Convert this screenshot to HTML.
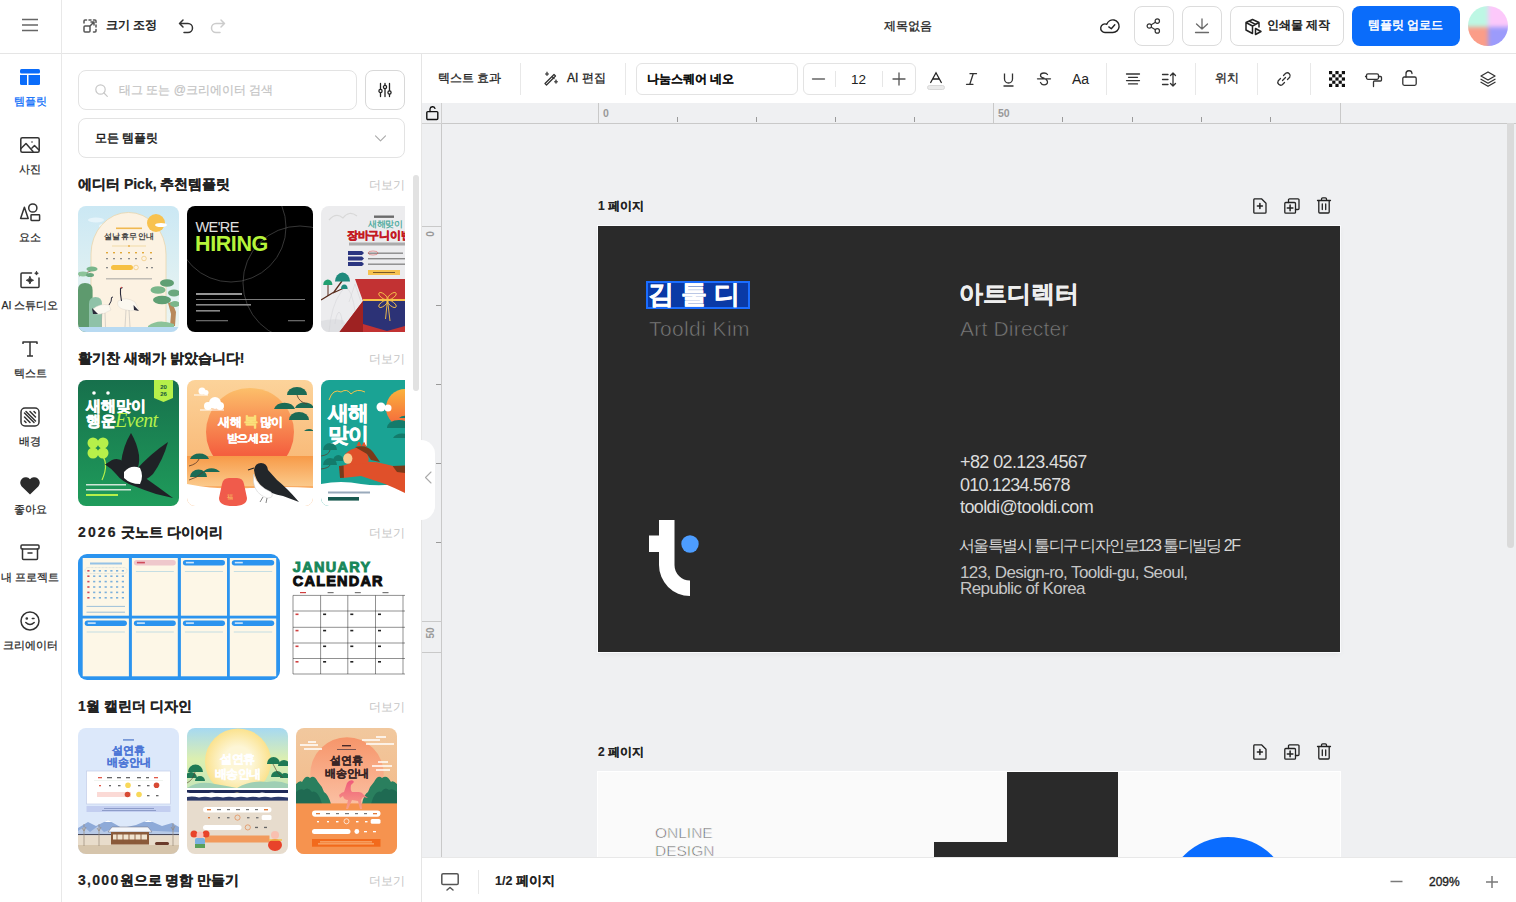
<!DOCTYPE html>
<html><head><meta charset="utf-8">
<style>
*{box-sizing:border-box;margin:0;padding:0}
html,body{width:1516px;height:902px;overflow:hidden;background:#fff;font-family:"Liberation Sans",sans-serif;color:#222}
.a{position:absolute}
.t{position:absolute;white-space:nowrap;line-height:1}
svg{display:block;position:absolute;overflow:visible}
.ic{fill:none;stroke:#2b2b2b;stroke-width:1.5;stroke-linecap:round;stroke-linejoin:round}
.rl{font-size:10.5px;color:#2a2a2a;text-align:center;width:60px;left:0;-webkit-text-stroke:0.25px currentColor}
.m{-webkit-text-stroke:0.3px currentColor}
.hd{font-size:14px;font-weight:bold;color:#222;left:78px;-webkit-text-stroke:0.2px currentColor}
.b{-webkit-text-stroke:0.12px currentColor}
.more{font-size:12px;color:#c4c4c4;left:369px}
.th{position:absolute;border-radius:8px;overflow:hidden}
.vd{position:absolute;width:1px;top:63px;height:32px;background:#e8e8e8}
.tk{position:absolute;background:#9a9a9a}
</style></head><body>
<!-- ===== canvas background ===== -->
<div class="a" style="left:421px;top:103px;width:1095px;height:754px;background:#eff0f2"></div>

<!-- ===== borders ===== -->
<div class="a" style="left:0;top:53px;width:1516px;height:1px;background:#e5e5e5"></div>
<div class="a" style="left:61px;top:0;width:1px;height:902px;background:#e8e8e8"></div>
<div class="a" style="left:421px;top:54px;width:1px;height:848px;background:#e5e5e5"></div>

<!-- ===== top bar ===== -->
<svg style="left:21px;top:17px" width="18" height="16"><path d="M1 2.5H17M1 8H17M1 13.5H17" stroke="#666" stroke-width="1.5"/></svg>
<!-- resize icon -->
<svg style="left:83px;top:19px" width="14" height="14" class="ic" style="stroke:#444"><path d="M1 4V2A1 1 0 0 1 2 1H3.5M6 1H8M10.5 1H12A1 1 0 0 1 13 2V3.5M13 6V8M13 10.5V12A1 1 0 0 1 12 13H10.5" stroke="#555"/><rect x="1" y="7" width="6" height="6" rx="1" stroke="#555"/><path d="M7 7L11 3M8 3H11V6" stroke="#555"/></svg>
<div class="t" style="left:106px;top:19px;font-size:12px;color:#1a1a1a;-webkit-text-stroke:0.5px #1a1a1a">크기 조정</div>
<!-- undo/redo -->
<svg style="left:178px;top:18px" width="16" height="16" class="ic"><path d="M5 2L1.5 5.5L5 9M1.5 5.5H10A4.5 4.5 0 0 1 10 14.5H6" stroke="#333"/></svg>
<svg style="left:210px;top:18px" width="16" height="16" class="ic"><path d="M11 2L14.5 5.5L11 9M14.5 5.5H6A4.5 4.5 0 0 0 6 14.5H10" stroke="#ccc"/></svg>

<div class="t m" style="left:884px;top:20px;font-size:12px;color:#222">제목없음</div>

<!-- cloud check -->
<svg style="left:1100px;top:18px" width="20" height="16" class="ic"><path d="M5.3 14.5A4.3 4.3 0 1 1 6.8 6.3A6.3 6.3 0 1 1 12.8 14.5Z" stroke="#222" stroke-width="1.4"/><path d="M8.8 8.9L11.3 10.7L14.8 6.8" stroke="#222" stroke-width="1.4"/></svg>
<!-- share btn -->
<div class="a" style="left:1134px;top:6px;width:40px;height:40px;border:1px solid #dcdcdc;border-radius:8px"></div>
<svg style="left:1145px;top:17px" width="18" height="18" class="ic"><circle cx="12.3" cy="4.1" r="2.2" stroke="#333" stroke-width="1.2"/><circle cx="4.3" cy="9" r="2.2" stroke="#333" stroke-width="1.2"/><circle cx="12.3" cy="13.9" r="2.2" stroke="#333" stroke-width="1.2"/><path d="M6.3 7.8L10.4 5.3M6.3 10.2L10.4 12.7" stroke="#333" stroke-width="1.2"/></svg>
<!-- download btn -->
<div class="a" style="left:1182px;top:6px;width:40px;height:40px;border:1px solid #dcdcdc;border-radius:8px"></div>
<svg style="left:1193px;top:17px" width="18" height="18" class="ic"><path d="M9 2V12M3.5 7L9 12L14.5 7M2.5 15.5H15.5" stroke="#6a6a6a" stroke-width="1.3"/></svg>
<!-- print btn -->
<div class="a" style="left:1230px;top:6px;width:114px;height:40px;border:1px solid #dcdcdc;border-radius:8px"></div>
<svg style="left:1244px;top:18px" width="18" height="18" class="ic"><path d="M8.5 1.5L15 4.5V9M8.5 1.5L2 4.5V12L8.5 15.5M2 4.5L8.5 8L15 4.5M8.5 8V15.5M5 3L11.5 6.3" stroke="#222"/><path d="M11.5 10.5L17 13.5L11.5 16.5Z" stroke="#222"/></svg>
<div class="t" style="left:1267px;top:19px;font-size:12px;color:#1a1a1a;-webkit-text-stroke:0.5px #1a1a1a">인쇄물 제작</div>
<!-- upload btn -->
<div class="a" style="left:1352px;top:6px;width:108px;height:40px;border-radius:8px;background:#0a6cfa"></div>
<div class="t" style="left:1368px;top:19px;font-size:12px;color:#fff;-webkit-text-stroke:0.5px #fff">템플릿 업로드</div>
<div class="a" style="left:1468px;top:6px;width:40px;height:40px;border-radius:50%;overflow:hidden"><div class="a" style="left:-6px;top:-6px;width:52px;height:52px;filter:blur(2.2px)"><div class="a" style="left:0;top:0;width:26px;height:27px;background:#bdf7e4"></div><div class="a" style="left:26px;top:0;width:26px;height:27px;background:#fcc8fa"></div><div class="a" style="left:0;top:27px;width:26px;height:25px;background:#fb9d88"></div><div class="a" style="left:26px;top:27px;width:26px;height:25px;background:#9c9bfb"></div></div></div>

<!-- ===== left rail ===== -->
<svg style="left:20px;top:69px" width="20" height="16"><rect x="0" y="0" width="20" height="4.5" rx="1.5" fill="#0a6cfa"/><path d="M0 6H7V16H1.5A1.5 1.5 0 0 1 0 14.5Z" fill="#0a6cfa"/><path d="M8.5 6H20V14.5A1.5 1.5 0 0 1 18.5 16H8.5Z" fill="#0a6cfa"/></svg>
<div class="t rl" style="top:96px;color:#0a6cfa">템플릿</div>
<svg style="left:20px;top:137px" width="20" height="16" class="ic"><rect x="0.8" y="0.8" width="18.4" height="14.4" rx="1.5" stroke="#333"/><path d="M1 11.5L6 6.5L13 14.5M12 11L14.5 8.5L19 13" stroke="#333"/><circle cx="12" cy="5" r="0.8" fill="#333" stroke="none"/></svg>
<div class="t rl" style="top:164px">사진</div>
<svg style="left:20px;top:203px" width="20" height="18" class="ic"><path d="M4.4 4.3L0.6 15.4H8.2Z" stroke="#333"/><circle cx="12.8" cy="5" r="4.1" stroke="#333"/><rect x="11" y="11.8" width="8.6" height="5.6" rx="0.6" stroke="#333"/></svg>
<div class="t rl" style="top:232px">요소</div>
<svg style="left:20px;top:271px" width="20" height="18" class="ic"><path d="M11.5 2H2A1 1 0 0 0 1 3V15.5A1 1 0 0 0 2 16.5H18A1 1 0 0 0 19 15.5V7" stroke="#333"/><path d="M9.9 5.7Q10.3 8.9 13.5 9.3Q10.3 9.7 9.9 12.9Q9.5 9.7 6.3 9.3Q9.5 8.9 9.9 5.7Z" fill="#333" stroke="#333" stroke-width="1"/><path d="M16.5 0.5Q16.7 2.1 18.3 2.3Q16.7 2.5 16.5 4.1Q16.3 2.5 14.7 2.3Q16.3 2.1 16.5 0.5Z" fill="#333" stroke="#333" stroke-width="0.8"/></svg>
<div class="t rl" style="top:300px">AI 스튜디오</div>
<svg style="left:22px;top:341px" width="16" height="16" class="ic"><path d="M1 3V1H15V3M8 1V15M5 15H11" stroke="#333" stroke-linecap="butt"/></svg>
<div class="t rl" style="top:368px">텍스트</div>
<svg style="left:20px;top:407px" width="20" height="20" class="ic"><rect x="1" y="1" width="18" height="18" rx="4" stroke="#333"/><path d="M14 4.5L15.5 6M10 4.5L15.5 10M6 4.5L15.5 14M4.5 6L14 15.5M4.5 10L10 15.5M4.5 14L6 15.5" stroke="#333"/></svg>
<div class="t rl" style="top:436px">배경</div>
<svg style="left:19px;top:476px" width="22" height="19"><path d="M11 18.5L2.5 10.3A5.2 5.2 0 0 1 11 3.2A5.2 5.2 0 0 1 19.5 10.3Z" fill="#2b2b2b"/></svg>
<div class="t rl" style="top:504px">좋아요</div>
<svg style="left:20px;top:544px" width="20" height="16" class="ic"><rect x="1" y="1" width="18" height="4" rx="1" stroke="#333"/><path d="M2.5 5V14.5A1 1 0 0 0 3.5 15.5H16.5A1 1 0 0 0 17.5 14.5V5M8 9H12" stroke="#333"/></svg>
<div class="t rl" style="top:572px">내 프로젝트</div>
<svg style="left:20px;top:611px" width="20" height="20" class="ic"><circle cx="10" cy="10" r="9" stroke="#333"/><circle cx="6.8" cy="7.5" r="0.6" fill="#333" stroke="#333"/><path d="M12.3 7.5H14M5.8 11.5Q10 15.5 14.2 11.5" stroke="#333"/></svg>
<div class="t rl" style="top:640px">크리에이터</div>

<!-- ===== panel controls ===== -->
<div class="a" style="left:78px;top:70px;width:279px;height:40px;border:1px solid #e3e3e3;border-radius:8px"></div>
<svg style="left:95px;top:84px" width="13" height="13" class="ic"><circle cx="5.5" cy="5.5" r="4.7" stroke="#c8c8c8" stroke-width="1.2"/><path d="M9 9L12.3 12.3" stroke="#c8c8c8" stroke-width="1.2"/></svg>
<div class="t" style="left:119px;top:84px;font-size:12px;color:#c4c4c4;-webkit-text-stroke:0.2px #c4c4c4">태그 또는 @크리에이터 검색</div>
<div class="a" style="left:365px;top:70px;width:40px;height:40px;border:1px solid #d8d8d8;border-radius:8px"></div>
<svg style="left:378px;top:83px" width="14" height="14" class="ic"><path d="M2.5 0.5V13.5M7 0.5V13.5M11.5 0.5V13.5" stroke="#222" stroke-width="1.3"/><circle cx="2.5" cy="8" r="1.6" fill="#fff" stroke="#222" stroke-width="1.3"/><circle cx="7" cy="4" r="1.6" fill="#fff" stroke="#222" stroke-width="1.3"/><circle cx="11.5" cy="9.5" r="1.6" fill="#fff" stroke="#222" stroke-width="1.3"/></svg>
<div class="a" style="left:78px;top:118px;width:327px;height:40px;border:1px solid #e3e3e3;border-radius:8px"></div>
<div class="t" style="left:95px;top:132px;font-size:12px;color:#1a1a1a;-webkit-text-stroke:0.45px #1a1a1a">모든 템플릿</div>
<svg style="left:375px;top:135px" width="11" height="7" class="ic"><path d="M0.5 0.8L5.5 5.8L10.5 0.8" stroke="#aaa" stroke-width="1.1"/></svg>

<!-- section headers -->
<div class="t hd" style="top:177px">에디터 Pick, 추천템플릿</div><div class="t more" style="top:179px">더보기</div>
<div class="t hd" style="top:351px">활기찬 새해가 밝았습니다!</div><div class="t more" style="top:353px">더보기</div>
<div class="t hd" style="top:525px"><span style="letter-spacing:2.1px">2026</span> 굿노트 다이어리</div><div class="t more" style="top:527px">더보기</div>
<div class="t hd" style="top:699px">1월 캘린더 디자인</div><div class="t more" style="top:701px">더보기</div>
<div class="t hd" style="top:873px"><span style="letter-spacing:1.3px">3,000</span>원으로 명함 만들기</div><div class="t more" style="top:875px">더보기</div>

<!-- ===== thumbnails row 1 ===== -->
<div class="th" style="left:78px;top:206px;width:101px;height:126px">
<svg width="101" height="126" style="position:static">
<defs><linearGradient id="r1a" x1="0" y1="0" x2="0" y2="1"><stop offset="0" stop-color="#cbe8f4"/><stop offset="1" stop-color="#eef6f1"/></linearGradient></defs>
<rect width="101" height="126" fill="url(#r1a)"/>
<ellipse cx="18" cy="14" rx="8" ry="2.5" fill="#e6f4fa"/><ellipse cx="30" cy="20" rx="9" ry="3" fill="#eef8fb"/>
<path d="M13 126V48A37 41 0 0 1 88 48V126Z" fill="#fcf2e2" stroke="#e9d6ad" stroke-width="0.8"/>
<circle cx="78" cy="17" r="9" fill="#f8c24f"/><ellipse cx="83" cy="19" rx="6" ry="2" fill="#fff"/>
<rect x="38" y="21.5" width="26" height="1.6" fill="#f0b850"/>
<text x="51" y="33" font-size="7.5" text-anchor="middle" fill="#3d3d3d" font-weight="bold" letter-spacing="-0.3">설날 휴무 안내</text>
<path d="M34 40H68" stroke="#eac981" stroke-width="0.6"/><circle cx="51" cy="40" r="1" fill="#eab050"/>
<g fill="#e2a93a"><rect x="28" y="46" width="2" height="1.4"/><rect x="35" y="46" width="2" height="1.4"/><rect x="42" y="46" width="2" height="1.4"/><rect x="50" y="46" width="2" height="1.4"/><rect x="57" y="46" width="2" height="1.4"/><rect x="64" y="46" width="2" height="1.4"/><rect x="72" y="46" width="2" height="1.4"/></g>
<g fill="#8a8a8a"><rect x="28" y="52" width="2" height="1.3"/><rect x="35" y="52" width="2" height="1.3"/><rect x="42" y="52" width="2" height="1.3"/><rect x="50" y="52" width="2" height="1.3"/><rect x="57" y="52" width="2" height="1.3"/><rect x="72" y="52" width="2" height="1.3"/><rect x="28" y="61" width="2" height="1.3"/><rect x="68" y="61" width="2" height="1.3"/><rect x="73" y="61" width="2" height="1.3"/></g>
<circle cx="66" cy="52.5" r="2.3" fill="none" stroke="#e8b44a" stroke-width="0.5"/><circle cx="58" cy="61.5" r="2.3" fill="none" stroke="#e8b44a" stroke-width="0.5"/>
<rect x="33" y="59" width="22" height="5" rx="2.5" fill="#f6c043"/>
<rect x="28" y="72" width="46" height="1.5" fill="#9a9a9a" opacity="0.6"/>
<path d="M0 126V84Q0 77 7 77Q14.6 77 14.6 84V126Z" fill="#5e9a6e"/><path d="M11 126V98Q11 91 17.5 91Q24 91 24 98V126Z" fill="#8fc2a8"/>
<path d="M1 70L17 63" stroke="#8a6a4a" stroke-width="0.9"/><ellipse cx="14" cy="63" rx="5.5" ry="2.6" fill="#79b68a"/><ellipse cx="5" cy="68" rx="5" ry="2.4" fill="#8cc39a"/><ellipse cx="12" cy="69" rx="4" ry="2" fill="#6aa87e"/>
<path d="M90 97L93 108L92 120L97 120L98 106L94 96Z" fill="#b8895a"/>
<ellipse cx="89" cy="77" rx="7" ry="3.8" fill="#5f9f73"/><ellipse cx="80" cy="84" rx="7.5" ry="3.8" fill="#7ab68a"/><ellipse cx="96" cy="87" rx="6" ry="3.4" fill="#6aa87e"/><ellipse cx="84" cy="94" rx="9" ry="4.2" fill="#5f9f73"/><ellipse cx="97" cy="98" rx="5" ry="3" fill="#7ab68a"/>
<path d="M70 120Q80 112 96 118V122H70Z" fill="#8cc39a"/>
<path d="M40 95Q48 90 57 96L61 104Q52 106 44 103Q38 100 40 95Z" fill="#fbf8f0" stroke="#d8d2c4" stroke-width="0.4"/>
<path d="M55.5 99L61 105L56 104Z" fill="#2b2b3b"/>
<path d="M43.5 95Q42 88 42.5 82.5L44.5 81.5" stroke="#2b2b3b" stroke-width="1.1" fill="none"/><circle cx="43.3" cy="81.5" r="0.8" fill="#d84a4a"/>
<path d="M48 104L47 121M51 104L52 121" stroke="#aaa" stroke-width="0.45"/>
<path d="M15 103Q22 97 31 99L33 104Q26 109 18 108Z" fill="#fbf8f0" stroke="#d8d2c4" stroke-width="0.4"/>
<path d="M14 102L20 108L15 108Z" fill="#2b2b3b"/>
<path d="M31 99Q34 95 33.5 91.5L35 91" stroke="#2b2b3b" stroke-width="1" fill="none"/>
<path d="M24 107L23 121M27 107L27.5 121" stroke="#aaa" stroke-width="0.45"/>
<rect x="0" y="121" width="101" height="5" fill="#b8daf2"/>
</svg></div>

<div class="th" style="left:187px;top:206px;width:126px;height:126px;background:#000">
<svg width="126" height="126" style="position:static">
<circle cx="44" cy="21" r="55" fill="none" stroke="#5a5a5a" stroke-width="0.6"/>
<circle cx="113" cy="77" r="57" fill="none" stroke="#5a5a5a" stroke-width="0.6"/>
<text x="8.5" y="25.5" font-size="14.5" fill="#e0e0e0" letter-spacing="-0.6" style="font-weight:normal">WE'RE</text>
<text x="8" y="45" font-size="21.5" font-weight="bold" fill="#b6f43a" letter-spacing="-0.4">HIRING</text>
<rect x="9" y="87" width="46" height="2" fill="#bbb" opacity="0.8"/>
<path d="M9 93.5H118" stroke="#9a9a9a" stroke-width="0.8"/>
<rect x="9" y="98" width="55" height="1.6" fill="#888"/><rect x="9" y="104" width="24" height="1.6" fill="#888"/>
<rect x="9" y="114" width="32" height="1.3" fill="#666"/><rect x="101" y="114" width="17" height="1.3" fill="#666"/>
</svg></div>

<div class="th" style="left:321px;top:206px;width:84px;height:126px;border-radius:8px 0 0 8px;background:#ececee">
<svg width="84" height="126" style="position:static">
<path d="M8 14Q15 6 22 12Q28 4 36 10" stroke="#d8d8d8" stroke-width="1.2" fill="none"/>
<rect x="53" y="9.5" width="20" height="2.4" fill="#555" opacity="0.85"/>
<text x="47" y="20.8" font-size="8.5" fill="#3aa596" stroke="#3aa596" stroke-width="0.2" letter-spacing="-0.4">새해맞이</text>
<text x="26" y="32.6" font-size="11" font-weight="bold" fill="#c41a24" stroke="#c41a24" stroke-width="0.6" letter-spacing="-0.3">장바구니이벤트</text>
<rect x="28" y="36.5" width="56" height="3" fill="#777" opacity="0.55"/>
<g fill="#2b3580"><path d="M27 45H41L43 47L41 49H27Z"/><path d="M27 50.5H41L43 52.5L41 54.5H27Z"/><path d="M27 56H41L43 58L41 60H27Z"/></g>
<g fill="#8a8a8a"><rect x="47" y="46.5" width="35" height="1.4"/><rect x="47" y="52" width="37" height="1.4"/><rect x="47" y="57.5" width="37" height="1.4"/></g>
<ellipse cx="52" cy="47" rx="5" ry="2" fill="none" stroke="#d84848" stroke-width="0.5"/>
<rect x="47" y="64" width="32" height="5" fill="#f6c350"/><rect x="52" y="66" width="22" height="1" fill="#7a5a2a"/>
<path d="M0 126V115Q10 112 22 114L30 126Z" fill="#dfe0e3"/>
<path d="M8 126Q10 100 20 86Q26 78 30 88Q36 104 34 126M14 118Q15 108 18 106Q21 108 21 118M28 96L34 78L40 96" fill="none" stroke="#d2d3d6" stroke-width="0.5"/>
<path d="M34 73H84V126H18.5L42 95Z" fill="#c23233"/>
<path d="M18.5 126L42 95V126H33Z" fill="#9e2222"/>
<path d="M42 95H84V120L66 125L42 118Z" fill="#2c3276"/>
<rect x="42" y="93" width="42" height="2" fill="#f7c24a"/>
<g fill="none" stroke="#f7c24a" stroke-width="0.9"><ellipse cx="62" cy="90" rx="5" ry="2.2" transform="rotate(35 62 90)"/><ellipse cx="71" cy="90" rx="5" ry="2.2" transform="rotate(-35 71 90)"/><ellipse cx="62" cy="98" rx="5" ry="2.2" transform="rotate(-35 62 98)"/><ellipse cx="71" cy="98" rx="5" ry="2.2" transform="rotate(35 71 98)"/><path d="M66.5 94L64.5 113M66.5 94L69 115"/></g>
<path d="M0 94L13 86L21 75M12 87L23 82" stroke="#5b2e1e" stroke-width="1.3" fill="none"/>
<path d="M7 79L7 90" stroke="#5b2e1e" stroke-width="1"/>
<path d="M14 75.5A7.5 9 0 0 1 29 75.5Z" fill="#1f8a7c"/><path d="M2.2 79A4.6 5.5 0 0 1 11.4 79Z" fill="#22a070"/><path d="M20 83A3.3 4.5 0 0 1 26.6 83Z" fill="#1f8a7c"/>
</svg></div>
<!-- ===== thumbnails row 2 ===== -->
<div class="th" style="left:78px;top:380px;width:101px;height:126px">
<svg width="101" height="126" style="position:static">
<defs><linearGradient id="r2a" x1="0" y1="0" x2="0" y2="1"><stop offset="0" stop-color="#17704c"/><stop offset="1" stop-color="#1f9c5b"/></linearGradient></defs>
<rect width="101" height="126" fill="url(#r2a)"/>
<path d="M76 0H95V18L85.5 22L76 18Z" fill="#b6f04a"/>
<text x="85.5" y="9" font-size="6" font-weight="bold" fill="#14573a" text-anchor="middle">20</text><text x="85.5" y="16" font-size="6" font-weight="bold" fill="#14573a" text-anchor="middle">26</text>
<circle cx="16" cy="13" r="1.8" fill="#fff"/><circle cx="30" cy="13" r="1.8" fill="#fff"/>
<text x="8" y="30.5" font-size="14.5" font-weight="bold" fill="#fff" stroke="#fff" stroke-width="0.7" letter-spacing="0">새해맞이</text>
<text x="8" y="46" font-size="14.5" font-weight="bold" fill="#fff" stroke="#fff" stroke-width="0.7" letter-spacing="0">행운</text>
<text x="37" y="46.5" font-size="20" font-style="italic" fill="#b6f04a" font-family="Liberation Serif" letter-spacing="-0.6">Event</text>
<g fill="#b6f04a"><circle cx="15" cy="63" r="5.5"/><circle cx="25" cy="63" r="5.5"/><circle cx="15" cy="73" r="5.5"/><circle cx="25" cy="73" r="5.5"/></g>
<path d="M22 73Q32 82 24 100" stroke="#b6f04a" stroke-width="1.2" fill="none"/>
<path d="M27 84.5L34 80Q40 77 46 82L58 91Q70 100 80 107L95 118L78 114Q66 110 56 106Q44 102 38 94Q33 88 27 84.5Z" fill="#1f2226"/>
<path d="M43 83Q45 66 53 53Q59 63 61 75Q62 85 58 92Z" fill="#1f2226"/>
<path d="M57 91Q72 74 90 62Q85 80 75 94Q68 101 61 101Z" fill="#1f2226"/>
<path d="M46 92Q53 84 62 88Q66 96 62 104Q52 104 46 98Z" fill="#fff"/>
<rect x="8" y="104" width="40" height="1.5" fill="#cfe6d8"/><rect x="8" y="109" width="45" height="1.5" fill="#cfe6d8"/>
<rect x="8" y="114" width="32" height="2" fill="#b6f04a"/>
</svg></div>

<div class="th" style="left:187px;top:380px;width:126px;height:126px">
<svg width="126" height="126" style="position:static">
<defs><linearGradient id="r2b" x1="0" y1="0" x2="0" y2="1"><stop offset="0" stop-color="#fcd39a"/><stop offset="0.6" stop-color="#f9bb7a"/><stop offset="1" stop-color="#f9a458"/></linearGradient>
<linearGradient id="r2c" x1="0" y1="0" x2="0" y2="1"><stop offset="0" stop-color="#fcbf6a"/><stop offset="0.75" stop-color="#f4603f"/></linearGradient>
<linearGradient id="r2d" x1="0" y1="0" x2="0" y2="1"><stop offset="0" stop-color="#f79a48"/><stop offset="1" stop-color="#fbc98a"/></linearGradient></defs>
<rect width="126" height="126" fill="url(#r2b)"/>
<circle cx="63" cy="52" r="44" fill="url(#r2c)"/>
<rect x="0" y="76" width="126" height="30" fill="url(#r2d)"/>
<path d="M0 104Q30 110 63 108Q95 106 126 108V126H0Z" fill="#fff"/>
<text x="31" y="45.5" font-size="11.5" font-weight="bold" fill="#fff" stroke="#fff" stroke-width="0.4" letter-spacing="-0.5">새해 <tspan fill="#fbe07a" stroke="#fbe07a" font-size="13.5">복</tspan> 많이</text>
<text x="39.5" y="61.5" font-size="11" font-weight="bold" fill="#fff" stroke="#fff" stroke-width="0.4" letter-spacing="-0.3">받으세요!</text>
<g fill="#1c6b55"><path d="M100 15A10 8 0 0 1 120 15Z"/><path d="M87 29A11 9 0 0 1 108 29Z"/><path d="M108 28A10 8 0 0 1 127 28Z"/><path d="M102 40A10 8 0 0 1 122 40Z"/><path d="M117 51A7 7 0 0 1 127 51Z"/>
<path d="M3 79A10 8 0 0 1 22 79Z"/><path d="M16 92A10 8 0 0 1 33 92Z"/><path d="M3 97A8 7 0 0 1 20 97Z"/></g>
<path d="M110 15Q112 22 120 24M2 86Q10 84 12 79M2 100Q10 98 16 92" stroke="#5a3a28" stroke-width="0.8" fill="none"/>
<g fill="#fff"><circle cx="15" cy="11" r="3.5"/><circle cx="19" cy="12.5" r="2.5"/><path d="M7 15H21" stroke="#fff" stroke-width="1"/><circle cx="28" cy="23" r="6"/><circle cx="21" cy="26" r="4"/><circle cx="33" cy="26" r="4"/><path d="M13 30H37" stroke="#fff" stroke-width="1.2"/></g>
<path d="M35 104Q36 98 42 98H50Q56 98 57 104L60 118Q60 126 46 126Q32 126 32 118Z" fill="#f05b4b"/>
<text x="40" y="119" font-size="6" fill="#f8d46a">福</text>
<path d="M67 90Q68 83 74 83Q80 83 81 90L90 100Q100 108 112 122L96 116Q84 114 76 108Q68 100 67 90Z" fill="#22262a"/>
<path d="M66.5 94Q70 106 84 112Q88 118 80 118Q68 114 66.5 102Z" fill="#fff" stroke="#c8c8c8" stroke-width="0.5"/>
<path d="M67 88L61 90" stroke="#22262a" stroke-width="1.2"/><path d="M76 117L73 122M80 118L79 123" stroke="#333" stroke-width="0.6"/>
</svg></div>

<div class="th" style="left:321px;top:380px;width:84px;height:126px;border-radius:8px 0 0 8px">
<svg width="84" height="126" style="position:static">
<defs><linearGradient id="r2e" x1="0" y1="0" x2="0" y2="1"><stop offset="0" stop-color="#fbb23c"/><stop offset="1" stop-color="#f4643c"/></linearGradient></defs>
<rect width="84" height="126" fill="#1aa394"/>
<circle cx="84" cy="28" r="19" fill="url(#r2e)"/>
<g fill="#fff"><circle cx="60" cy="27" r="4.5"/><circle cx="67" cy="28" r="3.5"/></g>
<path d="M8 20Q12 8 20 12Q26 8 30 14Q36 8 44 12" stroke="#f5c24a" stroke-width="1" fill="none"/>
<text x="7" y="40" font-size="21" font-weight="bold" fill="#fff" stroke="#fff" stroke-width="0.6" letter-spacing="-1.5">새해</text>
<text x="7" y="62" font-size="21" font-weight="bold" fill="#fff" stroke="#fff" stroke-width="0.6" letter-spacing="-1.5">맞이</text>
<g fill="#137b6b"><path d="M66 48A12 8 0 0 1 90 48Z"/><path d="M72 58A10 8 0 0 1 90 58Z"/><path d="M78 38A8 7 0 0 1 90 38Z"/><path d="M2 70A7 7 0 0 1 16 70Z"/><path d="M2 85A7 7 0 0 1 16 85Z"/><path d="M12 81A5.3 6 0 0 1 22.6 81Z"/></g>
<path d="M0 76Q8 75 9 70M0 89Q8 88 9 85" stroke="#5a3a28" stroke-width="0.7" fill="none"/>
<path d="M0 104Q20 100 40 104Q60 107 84 103V126H0Z" fill="#fff"/>
<path d="M30 83Q50 80 64 84Q74 86 84 90V113Q74 108 64 104Q52 100 40 96L22 98L18 87Z" fill="#e0502a"/>
<path d="M18 86L22.6 85.6L23 97.7L19 98Z" fill="#7a3a1a"/>
<path d="M71.6 86L84 85.6V93L76 92Z" fill="#7a3a1a"/>
<path d="M24 74Q30 68 40 67L45 72Q49 78 47 83L30 85Q24 82 24 74Z" fill="#e0502a"/>
<path d="M36 66L38 62L40 66M41 66L43 62.5L45 67" fill="#e0502a" stroke="#e0502a" stroke-width="1"/>
<path d="M34 67Q46 64 52 72L59 82L50 80L46 74Z" fill="#7a3a1a"/>
<ellipse cx="26.8" cy="78.5" rx="4.6" ry="5.2" fill="#f9cc90"/>
<rect x="7" y="111.5" width="42" height="2" fill="#9ab"/><rect x="7" y="117" width="31" height="3.6" fill="#1a5a50"/>
</svg></div>
<div class="th" style="left:78px;top:554px;width:202px;height:126px;border-radius:9px;background:#2b94ef">
<svg width="202" height="126" style="position:static">
<rect x="4.7" y="4" width="46.2" height="57.7" fill="#fdf7e7"/>
<rect x="53.9" y="4" width="45.9" height="57.7" fill="#fdf7e7"/>
<rect x="55.9" y="6" width="41.9" height="5.5" rx="2.75" fill="#efc8cc"/>
<rect x="58.9" y="7.8" width="8" height="1.6" fill="#d04a5a"/>
<path d="M57.9 17.5H95.8" stroke="#9fcde0" stroke-width="0.6"/>
<rect x="102.9" y="4" width="46.1" height="57.7" fill="#fdf7e7"/>
<rect x="104.9" y="6" width="42.1" height="5.5" rx="2.75" fill="#2b94ef"/>
<rect x="107.9" y="7.8" width="8" height="1.6" fill="#cfe6fb"/>
<path d="M106.9 17.5H145" stroke="#9fcde0" stroke-width="0.6"/>
<rect x="151.8" y="4" width="46.4" height="57.7" fill="#fdf7e7"/>
<rect x="153.8" y="6" width="42.4" height="5.5" rx="2.75" fill="#2b94ef"/>
<rect x="156.8" y="7.8" width="8" height="1.6" fill="#cfe6fb"/>
<path d="M155.8 17.5H194.2" stroke="#9fcde0" stroke-width="0.6"/>
<rect x="4.7" y="64.5" width="46.2" height="57.8" fill="#fdf7e7"/>
<rect x="6.7" y="66.5" width="42.2" height="5.5" rx="2.75" fill="#2b94ef"/>
<rect x="9.7" y="68.3" width="8" height="1.6" fill="#cfe6fb"/>
<path d="M8.7 78.0H46.9" stroke="#9fcde0" stroke-width="0.6"/>
<rect x="53.9" y="64.5" width="45.9" height="57.8" fill="#fdf7e7"/>
<rect x="55.9" y="66.5" width="41.9" height="5.5" rx="2.75" fill="#2b94ef"/>
<rect x="58.9" y="68.3" width="8" height="1.6" fill="#cfe6fb"/>
<path d="M57.9 78.0H95.8" stroke="#9fcde0" stroke-width="0.6"/>
<rect x="102.9" y="64.5" width="46.1" height="57.8" fill="#fdf7e7"/>
<rect x="104.9" y="66.5" width="42.1" height="5.5" rx="2.75" fill="#2b94ef"/>
<rect x="107.9" y="68.3" width="8" height="1.6" fill="#cfe6fb"/>
<path d="M106.9 78.0H145" stroke="#9fcde0" stroke-width="0.6"/>
<rect x="151.8" y="64.5" width="46.4" height="57.8" fill="#fdf7e7"/>
<rect x="153.8" y="66.5" width="42.4" height="5.5" rx="2.75" fill="#2b94ef"/>
<rect x="156.8" y="68.3" width="8" height="1.6" fill="#cfe6fb"/>
<path d="M155.8 78.0H194.2" stroke="#9fcde0" stroke-width="0.6"/>
<rect x="12" y="8.5" width="32" height="2" fill="#7ab4e6" opacity="0.8"/>
<rect x="7" y="13.6" width="42" height="6" rx="3" fill="none" stroke="#9bc" stroke-width="0.4" stroke-dasharray="0.8 0.6"/>
<rect x="9.3" y="16.0" width="2.2" height="1.6" fill="#d04a5a"/>
<rect x="15.1" y="16.0" width="2.2" height="1.6" fill="#7ab0dc"/>
<rect x="20.8" y="16.0" width="2.2" height="1.6" fill="#7ab0dc"/>
<rect x="26.6" y="16.0" width="2.2" height="1.6" fill="#7ab0dc"/>
<rect x="32.3" y="16.0" width="2.2" height="1.6" fill="#7ab0dc"/>
<rect x="38.0" y="16.0" width="2.2" height="1.6" fill="#7ab0dc"/>
<rect x="43.8" y="16.0" width="2.2" height="1.6" fill="#7ab0dc"/>
<rect x="9.3" y="21.4" width="2.2" height="1.6" fill="#d04a5a"/>
<rect x="15.1" y="21.4" width="2.2" height="1.6" fill="#7ab0dc"/>
<rect x="20.8" y="21.4" width="2.2" height="1.6" fill="#7ab0dc"/>
<rect x="26.6" y="21.4" width="2.2" height="1.6" fill="#7ab0dc"/>
<rect x="32.3" y="21.4" width="2.2" height="1.6" fill="#7ab0dc"/>
<rect x="38.0" y="21.4" width="2.2" height="1.6" fill="#7ab0dc"/>
<rect x="43.8" y="21.4" width="2.2" height="1.6" fill="#7ab0dc"/>
<rect x="9.3" y="26.8" width="2.2" height="1.6" fill="#d04a5a"/>
<rect x="15.1" y="26.8" width="2.2" height="1.6" fill="#7ab0dc"/>
<rect x="20.8" y="26.8" width="2.2" height="1.6" fill="#7ab0dc"/>
<rect x="26.6" y="26.8" width="2.2" height="1.6" fill="#7ab0dc"/>
<rect x="32.3" y="26.8" width="2.2" height="1.6" fill="#7ab0dc"/>
<rect x="38.0" y="26.8" width="2.2" height="1.6" fill="#7ab0dc"/>
<rect x="43.8" y="26.8" width="2.2" height="1.6" fill="#7ab0dc"/>
<rect x="9.3" y="32.2" width="2.2" height="1.6" fill="#d04a5a"/>
<rect x="15.1" y="32.2" width="2.2" height="1.6" fill="#7ab0dc"/>
<rect x="20.8" y="32.2" width="2.2" height="1.6" fill="#7ab0dc"/>
<rect x="26.6" y="32.2" width="2.2" height="1.6" fill="#7ab0dc"/>
<rect x="32.3" y="32.2" width="2.2" height="1.6" fill="#7ab0dc"/>
<rect x="38.0" y="32.2" width="2.2" height="1.6" fill="#7ab0dc"/>
<rect x="43.8" y="32.2" width="2.2" height="1.6" fill="#7ab0dc"/>
<rect x="9.3" y="37.6" width="2.2" height="1.6" fill="#d04a5a"/>
<rect x="15.1" y="37.6" width="2.2" height="1.6" fill="#7ab0dc"/>
<rect x="20.8" y="37.6" width="2.2" height="1.6" fill="#7ab0dc"/>
<rect x="26.6" y="37.6" width="2.2" height="1.6" fill="#7ab0dc"/>
<rect x="32.3" y="37.6" width="2.2" height="1.6" fill="#7ab0dc"/>
<rect x="38.0" y="37.6" width="2.2" height="1.6" fill="#7ab0dc"/>
<rect x="43.8" y="37.6" width="2.2" height="1.6" fill="#7ab0dc"/>
<rect x="9.3" y="43.0" width="2.2" height="1.6" fill="#d04a5a"/>
<rect x="15.1" y="43.0" width="2.2" height="1.6" fill="#7ab0dc"/>
<rect x="20.8" y="43.0" width="2.2" height="1.6" fill="#7ab0dc"/>
<rect x="26.6" y="43.0" width="2.2" height="1.6" fill="#7ab0dc"/>
<rect x="32.3" y="43.0" width="2.2" height="1.6" fill="#7ab0dc"/>
<rect x="38.0" y="43.0" width="2.2" height="1.6" fill="#7ab0dc"/>
<rect x="43.8" y="43.0" width="2.2" height="1.6" fill="#7ab0dc"/>
<path d="M8.5 52.4H47M8.5 58.2H47" stroke="#5a9ad0" stroke-width="0.6"/>
</svg></div>
<div class="th" style="left:288px;top:554px;width:117px;height:126px;border-radius:8px 0 0 8px;background:#fff">
<svg width="117" height="126" style="position:static">
<text x="4.8" y="17.8" font-size="14.5" font-weight="bold" fill="#17875a" stroke="#17875a" stroke-width="0.9" letter-spacing="1.3">JANUARY</text>
<text x="4.8" y="32.2" font-size="14.5" font-weight="bold" fill="#0d0d0d" stroke="#0d0d0d" stroke-width="1" style="letter-spacing:1.2px">CALENDAR</text>
<rect x="12" y="38" width="6" height="1.2" fill="#d04040"/>
<rect x="39.6" y="38" width="6" height="1.2" fill="#777"/>
<rect x="66.8" y="38" width="6" height="1.2" fill="#777"/>
<rect x="94.5" y="38" width="6" height="1.2" fill="#777"/>
<path d="M5 41.4V120" stroke="#222" stroke-width="0.5"/>
<path d="M32.6 41.4V120" stroke="#222" stroke-width="0.5"/>
<path d="M59.8 41.4V120" stroke="#222" stroke-width="0.5"/>
<path d="M87.5 41.4V120" stroke="#222" stroke-width="0.5"/>
<path d="M115 41.4V120" stroke="#222" stroke-width="0.5"/>
<path d="M5 41.4H117" stroke="#222" stroke-width="0.5"/>
<path d="M5 57H117" stroke="#222" stroke-width="0.5"/>
<path d="M5 73.3H117" stroke="#222" stroke-width="0.5"/>
<path d="M5 89H117" stroke="#222" stroke-width="0.5"/>
<path d="M5 104.5H117" stroke="#222" stroke-width="0.5"/>
<path d="M5 120H117" stroke="#222" stroke-width="0.5"/>
<rect x="7.5" y="59.5" width="3" height="1.6" fill="#d04040"/>
<rect x="35.1" y="59.5" width="3" height="1.6" fill="#222"/>
<rect x="62.3" y="59.5" width="3" height="1.6" fill="#222"/>
<rect x="90.0" y="59.5" width="3" height="1.6" fill="#222"/>
<rect x="7.5" y="75.8" width="3" height="1.6" fill="#d04040"/>
<rect x="35.1" y="75.8" width="3" height="1.6" fill="#222"/>
<rect x="62.3" y="75.8" width="3" height="1.6" fill="#222"/>
<rect x="90.0" y="75.8" width="3" height="1.6" fill="#222"/>
<rect x="7.5" y="91.5" width="3" height="1.6" fill="#d04040"/>
<rect x="35.1" y="91.5" width="3" height="1.6" fill="#222"/>
<rect x="62.3" y="91.5" width="3" height="1.6" fill="#222"/>
<rect x="90.0" y="91.5" width="3" height="1.6" fill="#222"/>
<rect x="7.5" y="107.0" width="3" height="1.6" fill="#d04040"/>
<rect x="35.1" y="107.0" width="3" height="1.6" fill="#222"/>
<rect x="62.3" y="107.0" width="3" height="1.6" fill="#222"/>
<rect x="90.0" y="107.0" width="3" height="1.6" fill="#222"/>
</svg></div>
<!-- ===== thumbnails row 4 ===== -->
<div class="th" style="left:78px;top:728px;width:101px;height:126px;background:#dce8fa">
<svg width="101" height="126" style="position:static">
<rect x="45" y="11" width="11" height="1.8" fill="#7a9ad8"/>
<text x="50.5" y="26" font-size="10.5" font-weight="bold" fill="#4d76d6" stroke="#4d76d6" stroke-width="0.2" text-anchor="middle" letter-spacing="0">설연휴</text>
<text x="50.5" y="38" font-size="10.5" font-weight="bold" fill="#4d76d6" stroke="#4d76d6" stroke-width="0.2" text-anchor="middle" letter-spacing="0">배송안내</text>
<rect x="8.5" y="43" width="84" height="33" fill="#fff" stroke="#c8d2ea" stroke-width="0.8"/>
<g fill="#e05a4a"><rect x="20" y="49" width="4" height="1.3"/><rect x="76" y="49" width="4" height="1.3"/></g>
<g fill="#666"><rect x="29" y="49" width="5" height="1.3"/><rect x="39" y="49" width="4" height="1.3"/><rect x="48" y="49" width="4" height="1.3"/><rect x="59" y="49" width="4" height="1.3"/><rect x="68" y="49" width="3" height="1.3"/></g>
<path d="M16 52.5H85" stroke="#d8e2d8" stroke-width="0.4"/>
<g fill="#e05a4a"><rect x="21" y="57" width="2" height="1.3"/></g><g fill="#666"><rect x="31" y="57" width="2" height="1.3"/><rect x="40" y="57" width="2.5" height="1.3"/><rect x="60" y="57" width="2.5" height="1.3"/><rect x="69" y="57" width="2.5" height="1.3"/><rect x="69" y="67" width="2.5" height="1.3"/><rect x="78" y="67" width="2.5" height="1.3"/></g>
<rect x="19" y="64" width="34" height="5" fill="#fbdad6"/>
<circle cx="50" cy="57.3" r="2.8" fill="#f8d85a"/><circle cx="78.5" cy="57.3" r="2.8" fill="#d84a34"/><circle cx="49.5" cy="66.5" r="2.8" fill="#d84a34"/><circle cx="61" cy="66.5" r="2.8" fill="#f8d85a"/>
<rect x="8.5" y="78" width="84" height="6" fill="#c3cef0"/>
<rect x="26" y="80" width="50" height="0.8" fill="#8090c0"/><rect x="24" y="82" width="54" height="0.8" fill="#8090c0"/>
<path d="M0 100L10 94L18 98L30 92L44 100L58 97L70 92L84 98L94 95L101 99V108H0Z" fill="#8eaad8"/>
<path d="M26 94L30 92L34 94Z M66 94L70 92L75 94Z" fill="#fff"/>
<path d="M0 103L6 99L12 104L20 98L26 104L34 101L101 104V108H0Z" fill="#b7c9e6"/>
<rect x="0" y="106" width="101" height="1.2" fill="#4a4a5a"/>
<rect x="0" y="107.2" width="101" height="10" fill="#e8dccb"/>
<rect x="0" y="117" width="101" height="9" fill="#d6c5ac"/>
<path d="M30 104H74L70 99H34Z" fill="#f5f7fb" stroke="#6a6a7a" stroke-width="0.5"/>
<rect x="33" y="104" width="38" height="12.5" fill="#8a5a3a"/>
<rect x="35" y="106.5" width="34" height="5" fill="#f1e4d0"/>
<path d="M39 106V116M45 106V116M51 106V116M57 106V116M63 106V116" stroke="#8a5a3a" stroke-width="0.9"/>
<path d="M6 96V118M4 100L6 103L8 99M21 96V118M19 100L21 103L23 99M95 95V118M93 99L95 102L97 98" stroke="#9a8a7a" stroke-width="0.7" fill="none"/>
<g fill="#6a3a2a"><rect x="77" y="114" width="14" height="3" rx="1.5"/></g>
</svg></div>

<div class="th" style="left:187px;top:728px;width:101px;height:126px">
<svg width="101" height="126" style="position:static">
<defs><linearGradient id="r4b" x1="0" y1="0" x2="0" y2="1"><stop offset="0" stop-color="#a6d9f2"/><stop offset="0.5" stop-color="#dcefb0"/><stop offset="1" stop-color="#c6e6b8"/></linearGradient>
<radialGradient id="r4c"><stop offset="0.45" stop-color="#fdf6d6"/><stop offset="1" stop-color="#fbe28e"/></radialGradient></defs>
<rect width="101" height="62" fill="url(#r4b)"/>
<circle cx="51" cy="33.5" r="33" fill="url(#r4c)"/>
<text x="50.5" y="35" font-size="11.5" font-weight="bold" fill="#fff" stroke="#fff" stroke-width="0.45" text-anchor="middle" letter-spacing="-0.5">설연휴</text>
<text x="50.5" y="49.5" font-size="11.5" font-weight="bold" fill="#fff" stroke="#fff" stroke-width="0.45" text-anchor="middle" letter-spacing="-0.5">배송안내</text>
<path d="M0 60Q12 52 28 56Q40 58 50 60Q64 52 80 54Q92 52 101 56V62H0Z" fill="#9fcfb4"/>
<g fill="#1f7a55"><path d="M1 44A7.5 7.5 0 0 1 16 44Z"/><path d="M-2 50A6 6 0 0 1 10 50Z"/><path d="M8 53A5 5 0 0 1 18 53Z"/><path d="M80 36A6.5 7 0 0 1 93 36Z"/><path d="M91 38A6 6 0 0 1 103 38Z"/><path d="M84 49A6 6 0 0 1 96 49Z"/><path d="M93 50A5 5 0 0 1 103 50Z"/></g>
<path d="M0 55Q6 52 8 44M86 36Q90 46 96 50" stroke="#5a3a28" stroke-width="0.6" fill="none"/>
<rect x="0" y="60" width="101" height="2.5" fill="#fff"/>
<path d="M0 62H101V65Q88 67 75 64.5Q62 67 50 64.5Q38 67 25 64.5Q12 67 0 64.5Z" fill="#1f2a58"/>
<rect x="0" y="65" width="101" height="5" fill="#fff"/>
<path d="M0 69Q6 68 12 69.5Q18 68 24 69.5Q30 68 36 69.5Q42 68 48 69.5Q54 68 60 69.5Q66 68 72 69.5Q78 68 84 69.5Q90 68 101 69.5V73H0Z" fill="#2c3a6a"/>
<rect x="0" y="72.6" width="101" height="53.4" fill="#e7dccd"/>
<rect x="16" y="79" width="68.5" height="5.5" rx="2.75" fill="#fff"/>
<g fill="#e07a3a"><rect x="20" y="81" width="4" height="1.4"/><rect x="77" y="81" width="4" height="1.4"/></g>
<g fill="#777"><rect x="30" y="81" width="4" height="1.2"/><rect x="40" y="81" width="3" height="1.2"/><rect x="49" y="81" width="4" height="1.2"/><rect x="59" y="81" width="3" height="1.2"/><rect x="68" y="81" width="3" height="1.2"/></g>
<rect x="74.7" y="87" width="9.8" height="5" rx="1.5" fill="#fff"/>
<g fill="#777"><rect x="31" y="89" width="2" height="1.4"/><rect x="40" y="89" width="2.5" height="1.4"/><rect x="60" y="89" width="2.5" height="1.4"/><rect x="69" y="89" width="2.5" height="1.4"/></g>
<rect x="21" y="89" width="2" height="1.4" fill="#e07a3a"/>
<circle cx="50.5" cy="89.6" r="2.6" fill="none" stroke="#e07a3a" stroke-width="0.6"/>
<rect x="16" y="97" width="38.5" height="5" rx="2.5" fill="#fff"/>
<circle cx="60.8" cy="99.4" r="2.6" fill="none" stroke="#e07a3a" stroke-width="0.6"/>
<g fill="#666"><rect x="68" y="98.8" width="3" height="1.3"/><rect x="77" y="98.8" width="3" height="1.3"/></g>
<rect x="18" y="107.5" width="64.5" height="7" fill="#f29a5c"/>
<circle cx="7" cy="106" r="3.5" fill="#e8432a"/><circle cx="19" cy="106" r="3.5" fill="#e8432a"/><circle cx="13" cy="107" r="3.5" fill="#f9c0b8"/>
<rect x="8" y="110" width="10" height="7" rx="2" fill="#7ab0e0"/><rect x="8" y="116" width="10" height="4" fill="#5aa05a"/>
<ellipse cx="88" cy="117" rx="7" ry="6" fill="#e8432a"/><circle cx="88" cy="107" r="4" fill="#f9c0b0"/><path d="M82 112H95" stroke="#f2c24a" stroke-width="1.5"/>
</svg></div>

<div class="th" style="left:296px;top:728px;width:101px;height:126px">
<svg width="101" height="126" style="position:static">
<defs><linearGradient id="r4d" x1="0" y1="0" x2="0" y2="1"><stop offset="0" stop-color="#f1c89e"/><stop offset="1" stop-color="#f5b27e"/></linearGradient>
<linearGradient id="r4e" x1="0" y1="0" x2="0" y2="1"><stop offset="0" stop-color="#f6956a"/><stop offset="1" stop-color="#fbc4a8"/></linearGradient></defs>
<rect width="101" height="126" fill="url(#r4d)"/>
<circle cx="51" cy="46" r="36.7" fill="url(#r4e)"/>
<g stroke="#fff" stroke-width="1.3"><path d="M4 17H22M8 21H26M12 14H20M66 12H84M70 16H98M80 9H90M76 38H96M82 34H92M80 42H94"/></g>
<rect x="46" y="17" width="9" height="1.4" fill="#4a2a2a"/><rect x="41" y="21" width="19" height="0.9" fill="#6a4a4a"/>
<text x="50.5" y="35.5" font-size="10.5" font-weight="bold" fill="#3a2626" stroke="#3a2626" stroke-width="0.3" text-anchor="middle" letter-spacing="0">설연휴</text>
<text x="50.5" y="49" font-size="10.5" font-weight="bold" fill="#3a2626" stroke="#3a2626" stroke-width="0.3" text-anchor="middle" letter-spacing="0">배송안내</text>
<path d="M0 76V56Q4 52 6 54Q10 46 14 50Q18 46 22 54Q26 58 28 64Q32 66 35 76Z" fill="#2a7f5e"/><path d="M0 76V64Q4 60 8 62Q12 58 16 64Q20 62 24 70L26 76Z" fill="#1f6a52"/>
<path d="M101 76V56Q97 52 95 54Q91 46 86 50Q82 46 78 54Q74 58 72 64Q68 66 66 76Z" fill="#2a7f5e"/><path d="M101 76V64Q97 60 93 62Q89 58 85 64Q81 62 77 70L75 76Z" fill="#1f6a52"/>
<defs><linearGradient id="r4h" x1="0" y1="0" x2="0" y2="1"><stop offset="0" stop-color="#ef5a7a"/><stop offset="1" stop-color="#f7a088"/></linearGradient></defs>

<rect x="0" y="75.4" width="101" height="50.6" fill="#f6934f"/>
<path d="M53 53Q57 51 58 54L55 57Q54 62 56 64L63 64Q66 64 68 67L72 70L67 69L65 72L66 81H64L62 73L56 72L52 81H50L52 72Q48 72 47 68L44 70L43 67Q46 64 48 64L50 58Q50 55 53 53Z" fill="url(#r4h)"/>
<rect x="16" y="82.4" width="68.5" height="6.3" rx="3.1" fill="#fff"/>
<g fill="#e07a3a"><rect x="20" y="85" width="4" height="1.3"/><rect x="77" y="85" width="4" height="1.3"/></g>
<g fill="#777"><rect x="30" y="85" width="4" height="1.2"/><rect x="40" y="85" width="3" height="1.2"/><rect x="49" y="85" width="4" height="1.2"/><rect x="59" y="85" width="3" height="1.2"/><rect x="68" y="85" width="3" height="1.2"/></g>
<rect x="74.7" y="91" width="9.8" height="4.7" rx="1.5" fill="#fff"/>
<g fill="#fff"><rect x="21" y="93" width="2" height="1.4"/><rect x="31" y="93" width="2" height="1.4"/><rect x="40" y="93" width="2.5" height="1.4"/><rect x="60" y="93" width="2.5" height="1.4"/><rect x="69" y="93" width="2.5" height="1.4"/></g>
<circle cx="50.5" cy="93.3" r="2.5" fill="none" stroke="#fff" stroke-width="0.7"/>
<rect x="16" y="101" width="38.5" height="5" rx="2.5" fill="#fff"/>
<circle cx="60.8" cy="103.5" r="2.4" fill="#fff"/>
<g fill="#fff"><rect x="68" y="103" width="3" height="1.3"/><rect x="77" y="103" width="3" height="1.3"/></g>
<rect x="16" y="111" width="68.5" height="7.7" fill="#f26a1c"/>
<rect x="24" y="113.5" width="52" height="0.8" fill="#fbd0a0"/><rect x="22" y="115.5" width="56" height="0.8" fill="#fbd0a0"/>
</svg></div>


<!-- panel scrollbar -->
<div class="a" style="left:413px;top:175px;width:6px;height:216px;border-radius:3px;background:#e2e2e2"></div>
<!-- ===== toolbar ===== -->
<div class="t m" style="left:438px;top:72px;font-size:12px;color:#222">텍스트 효과</div>
<div class="vd" style="left:520px"></div>
<svg style="left:543px;top:71px" width="16" height="15" class="ic"><path d="M2 13.5L11 4.5L12.5 6L3.5 15Z" stroke="#333" stroke-width="1.3" transform="translate(0,-1)"/><path d="M9.5 6L11 7.5" stroke="#333" stroke-width="1.2"/><path d="M4 1.2Q4.2 2.8 5.8 3Q4.2 3.2 4 4.8Q3.8 3.2 2.2 3Q3.8 2.8 4 1.2Z" fill="#333" stroke="#333" stroke-width="0.6"/><path d="M13 9Q13.2 10.6 14.8 10.8Q13.2 11 13 12.6Q12.8 11 11.2 10.8Q12.8 10.6 13 9Z" fill="#333" stroke="#333" stroke-width="0.6"/></svg>
<div class="t m" style="left:567px;top:72px;font-size:12px;color:#222">AI 편집</div>
<div class="vd" style="left:625px"></div>
<div class="a" style="left:636px;top:63px;width:162px;height:32px;border:1px solid #e3e3e3;border-radius:6px"></div>
<div class="t b" style="left:647px;top:73px;font-size:12px;font-weight:bold;color:#111">나눔스퀘어 네오</div>
<div class="a" style="left:803px;top:63px;width:113px;height:32px;border:1px solid #e3e3e3;border-radius:6px"></div>
<svg style="left:812px;top:73px" width="13" height="12" class="ic"><path d="M0.5 6H12.5" stroke="#666" stroke-width="1.3"/></svg>
<div class="a" style="left:835px;top:71px;width:1px;height:16px;background:#e6e6e6"></div>
<div class="t" style="left:851px;top:73px;font-size:13.5px;color:#222">12</div>
<div class="a" style="left:882px;top:71px;width:1px;height:16px;background:#e6e6e6"></div>
<svg style="left:893px;top:73px" width="12" height="12" class="ic"><path d="M0 6H12M6 0V12" stroke="#555" stroke-width="1.3"/></svg>
<svg style="left:930px;top:72px" width="12" height="11" class="ic"><path d="M0.7 10.5L6 0.8L11.3 10.5M2.6 7H9.4" stroke="#222" stroke-width="1.3" stroke-linejoin="miter"/></svg>
<div class="a" style="left:927px;top:85px;width:18px;height:5px;border-radius:3px;background:#eaeaea;border:1px solid #d8d8d8"></div>
<svg style="left:966px;top:73px" width="11" height="12" class="ic"><path d="M4 0.7H10.5M0.5 11.3H7M7.2 0.7L3.8 11.3" stroke="#333" stroke-width="1.3"/></svg>
<svg style="left:1003px;top:73px" width="11" height="14" class="ic"><path d="M1.5 0.5V6A4 4 0 0 0 9.5 6V0.5M0.5 13H10.5" stroke="#333" stroke-width="1.3" stroke-linecap="butt"/></svg>
<svg style="left:1037px;top:72px" width="14" height="14" class="ic"><path d="M10.5 2.5Q9.5 1 7 1Q3.5 1 3.5 3.5Q3.5 5.5 7 6.2M3.5 10.5Q4.5 12.8 7 12.8Q10.5 12.8 10.5 10Q10.5 8.5 9 7.5M0.5 6.8H13.5" stroke="#333" stroke-width="1.3"/></svg>
<div class="t" style="left:1072px;top:72px;font-size:14px;color:#222">Aa</div>
<div class="vd" style="left:1106px"></div>
<svg style="left:1126px;top:73px" width="14" height="12" class="ic"><path d="M0.5 1H13.5M2.5 4.3H11.5M0.5 7.6H13.5M2.5 10.9H11.5" stroke="#333" stroke-width="1.3"/></svg>
<svg style="left:1162px;top:72px" width="15" height="15" class="ic"><path d="M0.5 2.5H6M0.5 7.5H6M0.5 12.5H6M11 1V14M8.5 3.5L11 1L13.5 3.5M8.5 11.5L11 14L13.5 11.5" stroke="#333" stroke-width="1.3"/></svg>
<div class="vd" style="left:1195px"></div>
<div class="t m" style="left:1215px;top:72px;font-size:12px;color:#222">위치</div>
<div class="vd" style="left:1257px"></div>
<svg style="left:1276px;top:71px" width="16" height="16" class="ic"><path d="M6.5 9.5L9.5 6.5M7.5 4.5L9.7 2.3A2.9 2.9 0 0 1 13.7 6.3L11.5 8.5M8.5 11.5L6.3 13.7A2.9 2.9 0 0 1 2.3 9.7L4.5 7.5" stroke="#333" stroke-width="1.3"/></svg>
<div class="vd" style="left:1310px"></div>
<svg style="left:1329px;top:71px" width="16" height="16"><g fill="#111"><rect x="0" y="0" width="3.2" height="3.2"/><rect x="6.4" y="0" width="3.2" height="3.2"/><rect x="12.8" y="0" width="3.2" height="3.2"/><rect x="3.2" y="3.2" width="3.2" height="3.2"/><rect x="9.6" y="3.2" width="3.2" height="3.2"/><rect x="0" y="6.4" width="3.2" height="3.2"/><rect x="6.4" y="6.4" width="3.2" height="3.2"/><rect x="12.8" y="6.4" width="3.2" height="3.2"/><rect x="3.2" y="9.6" width="3.2" height="3.2"/><rect x="9.6" y="9.6" width="3.2" height="3.2"/><rect x="0" y="12.8" width="3.2" height="3.2"/><rect x="6.4" y="12.8" width="3.2" height="3.2"/><rect x="12.8" y="12.8" width="3.2" height="3.2"/></g></svg>
<svg style="left:1365px;top:73px" width="18" height="15" class="ic"><rect x="1.5" y="0.8" width="12" height="5.5" rx="1.5" stroke="#333" stroke-width="1.3"/><path d="M13.5 3.5H15.5A1 1 0 0 1 16.5 4.5V7A1 1 0 0 1 15.5 8H9.5A1 1 0 0 0 8.5 9V13.5M1.5 3.5H0.5" stroke="#333" stroke-width="1.3"/></svg>
<svg style="left:1402px;top:70px" width="15" height="16" class="ic"><rect x="0.8" y="7" width="13.4" height="8.3" rx="1.5" stroke="#333" stroke-width="1.3"/><path d="M4 7V4A3 3 0 0 1 10 3.5" stroke="#333" stroke-width="1.3"/></svg>
<svg style="left:1480px;top:71px" width="16" height="16" class="ic"><path d="M8 1L15 5L8 9L1 5Z" stroke="#333" stroke-width="1.3"/><path d="M1 8.2L8 12.2L15 8.2M1 11.3L8 15.3L15 11.3" stroke="#333" stroke-width="1.3"/></svg>

<!-- ===== rulers ===== -->
<div class="a" style="left:422px;top:103px;width:1094px;height:21px;background:#eff0f2;border-bottom:1px solid #c9c9c9"></div>
<div class="a" style="left:422px;top:123px;width:20px;height:734px;background:#eff0f2;border-right:1px solid #c9c9c9"></div>
<div class="a" style="left:441px;top:103px;width:1px;height:21px;background:#d0d0d0"></div>
<div class="a" style="left:422px;top:123px;width:20px;height:1px;background:#d0d0d0"></div>
<svg style="left:425px;top:105px" width="14" height="15" class="ic"><rect x="1.8" y="6.6" width="11" height="7.9" rx="1" stroke="#111" stroke-width="1.4"/><path d="M5 6.6V4A2.6 2.6 0 0 1 10 3.4" stroke="#111" stroke-width="1.3"/></svg>
<!-- top ruler -->
<div class="tk" style="left:598px;top:103px;width:1px;height:20px;background:#c9c9c9"></div>
<div class="t" style="left:603px;top:107.5px;font-size:10.5px;font-weight:bold;color:#999">0</div>
<div class="tk" style="left:677px;top:117px;width:1px;height:5px"></div>
<div class="tk" style="left:756px;top:117px;width:1px;height:5px"></div>
<div class="tk" style="left:835px;top:117px;width:1px;height:5px"></div>
<div class="tk" style="left:914px;top:117px;width:1px;height:5px"></div>
<div class="tk" style="left:993px;top:103px;width:1px;height:20px;background:#c9c9c9"></div>
<div class="t" style="left:998px;top:107.5px;font-size:10.5px;font-weight:bold;color:#999">50</div>
<div class="tk" style="left:1062px;top:117px;width:1px;height:5px"></div>
<div class="tk" style="left:1132px;top:117px;width:1px;height:5px"></div>
<div class="tk" style="left:1201px;top:117px;width:1px;height:5px"></div>
<div class="tk" style="left:1270px;top:117px;width:1px;height:5px"></div>
<div class="tk" style="left:1340px;top:103px;width:1px;height:20px;background:#c9c9c9"></div>
<!-- left ruler -->
<div class="tk" style="left:422px;top:226px;width:20px;height:1px;background:#c9c9c9"></div>
<div class="t" style="left:428px;top:229px;font-size:10px;font-weight:bold;color:#999;transform:rotate(-90deg);transform-origin:center">0</div>
<div class="tk" style="left:436px;top:305px;width:5px;height:1px"></div>
<div class="tk" style="left:436px;top:384px;width:5px;height:1px"></div>
<div class="tk" style="left:436px;top:463px;width:5px;height:1px"></div>
<div class="tk" style="left:436px;top:542px;width:5px;height:1px"></div>
<div class="tk" style="left:422px;top:621px;width:20px;height:1px;background:#c9c9c9"></div>
<div class="t" style="left:425px;top:628px;font-size:10px;font-weight:bold;color:#999;transform:rotate(-90deg);transform-origin:center">50</div>
<div class="tk" style="left:422px;top:652px;width:20px;height:1px;background:#c9c9c9"></div>
<!-- right scrollbar -->
<div class="a" style="left:1507px;top:123px;width:7px;height:425px;border-radius:0 0 4px 4px;background:#dadada"></div>

<!-- ===== page 1 ===== -->
<div class="t b" style="left:598px;top:200px;font-size:12px;font-weight:bold;color:#222">1 페이지</div>
<svg style="left:1253px;top:198px" width="14" height="16" class="ic"><path d="M1.5 0.8H8.5L13 5.3V14.2A1 1 0 0 1 12 15.2H1.5A1 1 0 0 1 0.8 14.2V1.8A1 1 0 0 1 1.5 0.8Z" stroke="#222" stroke-width="1.3"/><path d="M6.9 5.5V10.5M4.4 8H9.4" stroke="#222" stroke-width="1.5"/></svg>
<svg style="left:1284px;top:198px" width="16" height="16" class="ic"><path d="M4.5 4.5V1.8A1 1 0 0 1 5.5 0.8H14A1 1 0 0 1 15 1.8V10.5A1 1 0 0 1 14 11.5H11.5" stroke="#222" stroke-width="1.3"/><rect x="0.8" y="4.5" width="10.7" height="10.7" rx="1" stroke="#222" stroke-width="1.3"/><path d="M6.1 7V12.7M3.3 9.9H8.9" stroke="#222" stroke-width="1.5"/></svg>
<svg style="left:1317px;top:197px" width="14" height="17" class="ic"><path d="M0.5 3.5H13.5M4.5 3.5V2A1.2 1.2 0 0 1 5.7 0.8H8.3A1.2 1.2 0 0 1 9.5 2V3.5M1.8 3.5V15A1 1 0 0 0 2.8 16H11.2A1 1 0 0 0 12.2 15V3.5M5.3 7V12.5M8.7 7V12.5" stroke="#222" stroke-width="1.3"/></svg>
<div class="a" style="left:598px;top:226px;width:742px;height:426px;background:#2a2a2a;box-shadow:0 0 0 1px #fafbfd,0 2px 6px rgba(0,0,0,0.05)"></div>
<!-- selection -->
<div class="a" style="left:646px;top:281px;width:104px;height:28px;border:2px solid #1a6dff;background:#0a3aa6"></div>
<div class="t" style="left:648px;top:281px;font-size:26px;font-weight:bold;color:#fff;-webkit-text-stroke:0.3px #fff">김 툴 디</div>
<div class="t" style="left:649px;top:318px;font-size:21px;color:#7a7a7a;letter-spacing:0.4px;-webkit-text-stroke:0.6px #2a2a2a">Tooldi Kim</div>
<div class="t" style="left:959px;top:282px;font-size:24px;font-weight:bold;color:#eee;-webkit-text-stroke:0.35px #eee">아트디렉터</div>
<div class="t" style="left:960px;top:318px;font-size:21px;color:#7a7a7a;letter-spacing:0.2px;-webkit-text-stroke:0.6px #2a2a2a">Art Directer</div>
<div class="t" style="left:960px;top:453px;font-size:18px;color:#dcdcdc;letter-spacing:-0.6px">+82 02.123.4567</div>
<div class="t" style="left:960px;top:476px;font-size:18px;color:#dcdcdc;letter-spacing:-0.8px">010.1234.5678</div>
<div class="t" style="left:960px;top:498px;font-size:18px;color:#dcdcdc;letter-spacing:-0.6px">tooldi@tooldi.com</div>
<div class="t" style="left:959px;top:538px;font-size:16px;color:#d6d6d6;letter-spacing:-1.55px">서울특별시 툴디구 디자인로123 툴디빌딩 2F</div>
<div class="t" style="left:960px;top:564px;font-size:17px;color:#c6c6c6;letter-spacing:-0.6px">123, Design-ro, Tooldi-gu, Seoul,</div>
<div class="t" style="left:960px;top:580px;font-size:17px;color:#c6c6c6;letter-spacing:-0.6px">Republic of Korea</div>
<svg style="left:0;top:0" width="1516" height="902"><path d="M659 520H674.5V565A15.5 15.5 0 0 0 690 580.5V596A31 31 0 0 1 659 565V552H649V535.5H659Z" fill="#fff"/><circle cx="690" cy="544" r="8.7" fill="#4d9dff"/></svg>

<!-- ===== page 2 ===== -->
<div class="t b" style="left:598px;top:746px;font-size:12px;font-weight:bold;color:#222">2 페이지</div>
<svg style="left:1253px;top:744px" width="14" height="16" class="ic"><path d="M1.5 0.8H8.5L13 5.3V14.2A1 1 0 0 1 12 15.2H1.5A1 1 0 0 1 0.8 14.2V1.8A1 1 0 0 1 1.5 0.8Z" stroke="#222" stroke-width="1.3"/><path d="M6.9 5.5V10.5M4.4 8H9.4" stroke="#222" stroke-width="1.5"/></svg>
<svg style="left:1284px;top:744px" width="16" height="16" class="ic"><path d="M4.5 4.5V1.8A1 1 0 0 1 5.5 0.8H14A1 1 0 0 1 15 1.8V10.5A1 1 0 0 1 14 11.5H11.5" stroke="#222" stroke-width="1.3"/><rect x="0.8" y="4.5" width="10.7" height="10.7" rx="1" stroke="#222" stroke-width="1.3"/><path d="M6.1 7V12.7M3.3 9.9H8.9" stroke="#222" stroke-width="1.5"/></svg>
<svg style="left:1317px;top:743px" width="14" height="17" class="ic"><path d="M0.5 3.5H13.5M4.5 3.5V2A1.2 1.2 0 0 1 5.7 0.8H8.3A1.2 1.2 0 0 1 9.5 2V3.5M1.8 3.5V15A1 1 0 0 0 2.8 16H11.2A1 1 0 0 0 12.2 15V3.5M5.3 7V12.5M8.7 7V12.5" stroke="#222" stroke-width="1.3"/></svg>
<div class="a" style="left:598px;top:772px;width:742px;height:85px;background:#fafafa;overflow:hidden;box-shadow:0 0 0 1px #fff">
  <div class="a" style="left:409px;top:0;width:111px;height:85px;background:#2a2a2a"></div>
  <div class="a" style="left:336px;top:70px;width:80px;height:20px;background:#2a2a2a"></div>
  <div class="a" style="left:568px;top:64.5px;width:124px;height:124px;border-radius:50%;background:#0a6cff"></div>
  <div class="t" style="left:57px;top:52px;font-size:15.5px;color:#333;line-height:17.5px;-webkit-text-stroke:0.7px #fafafa">ONLINE<br>DESIGN</div>
</div>


<!-- collapse handle -->
<div class="a" style="left:405px;top:440px;width:30px;height:80px;border-radius:0 14px 14px 0;background:#fff"></div>
<svg style="left:424px;top:471px" width="8" height="13" class="ic"><path d="M7 1L1.5 6.5L7 12" stroke="#aaa" stroke-width="1.1"/></svg>

<!-- ===== bottom bar ===== -->
<div class="a" style="left:422px;top:857px;width:1094px;height:45px;background:#fff;border-top:1px solid #e8e8e8"></div>
<svg style="left:441px;top:873px" width="18" height="18" class="ic"><rect x="0.8" y="0.8" width="16.4" height="10.8" rx="1.3" stroke="#555"/><path d="M6 17L9 14.5L12 17" stroke="#555"/></svg>
<div class="a" style="left:478px;top:870px;width:1px;height:24px;background:#e8e8e8"></div>
<div class="t b" style="left:495px;top:875px;font-size:12.5px;font-weight:bold;color:#222">1/2 페이지</div>
<svg style="left:1390px;top:875px" width="13" height="13" class="ic"><path d="M0.5 6.5H12.5" stroke="#7a7a7a" stroke-width="1.5" stroke-linecap="butt"/></svg>
<div class="t" style="left:1429px;top:876px;font-size:12px;color:#222;-webkit-text-stroke:0.35px #222">209%</div>
<svg style="left:1486px;top:876px" width="13" height="13" class="ic"><path d="M0 6H12M6 0V12" stroke="#7a7a7a" stroke-width="1.5" stroke-linecap="butt"/></svg>
</body></html>
